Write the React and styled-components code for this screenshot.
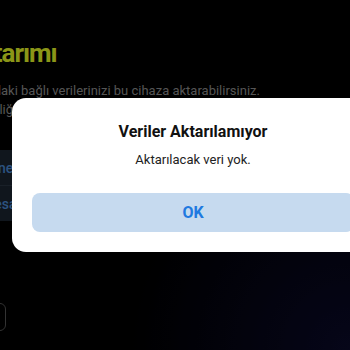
import React from 'react';
import styled, { createGlobalStyle } from 'styled-components';

const GlobalStyle = createGlobalStyle`
  html, body {
    margin: 0;
    padding: 0;
    background: #000;
  }
  body {
    font-family: Roboto, "Noto Sans", sans-serif;
  }
`;

const Screen = styled.div`
  position: relative;
  width: 350px;
  height: 350px;
  overflow: hidden;
  background: radial-gradient(circle at 100% 100%, #0a0a2a 0%, #000 45%);
`;

// the phone page is wider than the photographed part, so it starts off screen
const Page = styled.div`
  display: flex;
  flex-direction: column;
  margin-left: -84px;
  width: 470px;
  padding-top: 38px;
`;

const Heading = styled.h1`
  margin: 0;
  font-size: 26px;
  line-height: 30px;
  font-weight: 700;
  letter-spacing: -1px;
  color: #e8fa28;
`;

const Lead = styled.p`
  margin: 13px 0 0;
  font-size: 13px;
  line-height: 19px;
  color: #8e8e8e;
`;

const Card = styled.div`
  margin-top: 31px;
  display: flex;
  flex-direction: column;
  background: #1b2531;
  border-radius: 10px;
`;

const Row = styled.div`
  display: flex;
  align-items: center;
  gap: 22px;
  height: 35px;
  padding: 0 16px;
  border-top: ${p => (p.first ? 'none' : '1px solid #2a3644')};
`;

const RowIcon = styled.span`
  width: 28px;
  height: 28px;
  border-radius: 50%;
  background: #2a3644;
`;

const RowText = styled.span`
  font-size: 14px;
  font-weight: 500;
  color: #4a8ad6;
`;

const BottomButton = styled.div`
  margin-top: 82px;
  width: 88px;
  height: 26px;
  border: 1px solid #555;
  border-radius: 6px;
`;

const Backdrop = styled.div`
  position: absolute;
  inset: 0;
  background: rgba(0, 0, 0, 0.4);
`;

const Dialog = styled.div`
  position: absolute;
  left: 12px;
  top: 98px;
  width: 362px;
  box-sizing: border-box;
  padding: 24px 20px 20px;
  background: #fff;
  border-radius: 14px;
  display: flex;
  flex-direction: column;
  align-items: center;
`;

const Title = styled.div`
  font-size: 16px;
  line-height: 20px;
  font-weight: 700;
  color: #111;
`;

const Message = styled.div`
  margin-top: 9px;
  font-size: 13px;
  line-height: 18px;
  color: #222;
`;

const OkButton = styled.button`
  margin-top: 24px;
  width: 100%;
  height: 39px;
  border: none;
  border-radius: 8px;
  background: #c6daef;
  color: #2079e0;
  font-family: Roboto, "Noto Sans", sans-serif;
  font-size: 16px;
  font-weight: 700;
`;

export default function App() {
  return (
    <>
      <GlobalStyle />
      <Screen>
        <Page>
          <Heading>Veri Aktarımı</Heading>
          <Lead>
            Eski cihazınızdaki bağlı verilerinizi bu cihaza aktarabilirsiniz.
            <br />
            Aktarım güvenliği için cihazınızı açık tutun.
          </Lead>
          <Card>
            <Row first>
              <RowIcon />
              <RowText>Yönetilen veriler</RowText>
            </Row>
            <Row>
              <RowIcon />
              <RowText>Mesaj yedekleri</RowText>
            </Row>
          </Card>
          <BottomButton />
        </Page>
        <Backdrop />
        <Dialog>
          <Title>Veriler Aktarılamıyor</Title>
          <Message>Aktarılacak veri yok.</Message>
          <OkButton>OK</OkButton>
        </Dialog>
      </Screen>
    </>
  );
}
